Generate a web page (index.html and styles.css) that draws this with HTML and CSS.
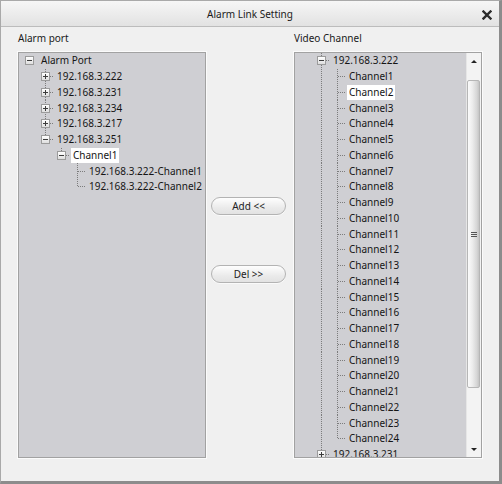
FILE: index.html
```html
<!DOCTYPE html>
<html>
<head>
<meta charset="utf-8">
<title>Alarm Link Setting</title>
<link rel="stylesheet" href="styles.css">
</head>
<body>
<div class="window">
  <div class="titlebar">
    <span></span>
    <span class="title">Alarm Link Setting</span>
    <span class="close"><svg width="10" height="10" viewBox="0 0 10 10"><path d="M1.5 1.5 L8.5 8.5 M8.5 1.5 L1.5 8.5" stroke="#2b2b2b" stroke-width="2.4" stroke-linecap="square"/></svg></span>
  </div>
  <div class="content">
    <div class="label">Alarm port</div>
    <div></div>
    <div class="label">Video Channel</div>

    <div class="panel">
      <div class="tree">
        <div class="row"><span class="c"><b class="ex minus"></b></span><span class="tx">Alarm Port</span></div>
        <div class="row"><span class="c"></span><span class="c t"><b class="ex plus"></b></span><span class="tx">192.168.3.222</span></div>
        <div class="row"><span class="c"></span><span class="c t"><b class="ex plus"></b></span><span class="tx">192.168.3.231</span></div>
        <div class="row"><span class="c"></span><span class="c t"><b class="ex plus"></b></span><span class="tx">192.168.3.234</span></div>
        <div class="row"><span class="c"></span><span class="c t"><b class="ex plus"></b></span><span class="tx">192.168.3.217</span></div>
        <div class="row"><span class="c"></span><span class="c l"><b class="ex minus"></b></span><span class="tx">192.168.3.251</span></div>
        <div class="row"><span class="c"></span><span class="c"></span><span class="c l"><b class="ex minus"></b></span><span class="tx sel">Channel1</span></div>
        <div class="row"><span class="c"></span><span class="c"></span><span class="c"></span><span class="c t"></span><span class="tx">192.168.3.222-Channel1</span></div>
        <div class="row"><span class="c"></span><span class="c"></span><span class="c"></span><span class="c l"></span><span class="tx">192.168.3.222-Channel2</span></div>
      </div>
    </div>

    <div class="mid">
      <button class="btn">Add &lt;&lt;</button>
      <button class="btn">Del &gt;&gt;</button>
    </div>

    <div class="panel split">
      <div class="tree">
        <div class="row"><span class="c"></span><span class="c t"><b class="ex minus"></b></span><span class="tx">192.168.3.222</span></div>
        <div class="row"><span class="c"></span><span class="c v"></span><span class="c t"></span><span class="tx">Channel1</span></div>
        <div class="row"><span class="c"></span><span class="c v"></span><span class="c t"></span><span class="tx sel">Channel2</span></div>
        <div class="row"><span class="c"></span><span class="c v"></span><span class="c t"></span><span class="tx">Channel3</span></div>
        <div class="row"><span class="c"></span><span class="c v"></span><span class="c t"></span><span class="tx">Channel4</span></div>
        <div class="row"><span class="c"></span><span class="c v"></span><span class="c t"></span><span class="tx">Channel5</span></div>
        <div class="row"><span class="c"></span><span class="c v"></span><span class="c t"></span><span class="tx">Channel6</span></div>
        <div class="row"><span class="c"></span><span class="c v"></span><span class="c t"></span><span class="tx">Channel7</span></div>
        <div class="row"><span class="c"></span><span class="c v"></span><span class="c t"></span><span class="tx">Channel8</span></div>
        <div class="row"><span class="c"></span><span class="c v"></span><span class="c t"></span><span class="tx">Channel9</span></div>
        <div class="row"><span class="c"></span><span class="c v"></span><span class="c t"></span><span class="tx">Channel10</span></div>
        <div class="row"><span class="c"></span><span class="c v"></span><span class="c t"></span><span class="tx">Channel11</span></div>
        <div class="row"><span class="c"></span><span class="c v"></span><span class="c t"></span><span class="tx">Channel12</span></div>
        <div class="row"><span class="c"></span><span class="c v"></span><span class="c t"></span><span class="tx">Channel13</span></div>
        <div class="row"><span class="c"></span><span class="c v"></span><span class="c t"></span><span class="tx">Channel14</span></div>
        <div class="row"><span class="c"></span><span class="c v"></span><span class="c t"></span><span class="tx">Channel15</span></div>
        <div class="row"><span class="c"></span><span class="c v"></span><span class="c t"></span><span class="tx">Channel16</span></div>
        <div class="row"><span class="c"></span><span class="c v"></span><span class="c t"></span><span class="tx">Channel17</span></div>
        <div class="row"><span class="c"></span><span class="c v"></span><span class="c t"></span><span class="tx">Channel18</span></div>
        <div class="row"><span class="c"></span><span class="c v"></span><span class="c t"></span><span class="tx">Channel19</span></div>
        <div class="row"><span class="c"></span><span class="c v"></span><span class="c t"></span><span class="tx">Channel20</span></div>
        <div class="row"><span class="c"></span><span class="c v"></span><span class="c t"></span><span class="tx">Channel21</span></div>
        <div class="row"><span class="c"></span><span class="c v"></span><span class="c t"></span><span class="tx">Channel22</span></div>
        <div class="row"><span class="c"></span><span class="c v"></span><span class="c t"></span><span class="tx">Channel23</span></div>
        <div class="row"><span class="c"></span><span class="c v"></span><span class="c l"></span><span class="tx">Channel24</span></div>
        <div class="row"><span class="c"></span><span class="c t"><b class="ex plus"></b></span><span class="tx">192.168.3.231</span></div>
      </div>
      <div class="sb">
        <div class="sb-btn"><span class="arr up"></span></div>
        <div class="sb-track">
          <div class="thumb"><span class="grip"></span></div>
        </div>
        <div class="sb-btn"><span class="arr down"></span></div>
      </div>
    </div>
  </div>
</div>
</body>
</html>
```

FILE: styles.css
```css
html, body {
  margin: 0;
  padding: 0;
  background: #f0f0f0;
}
body {
  font-family: "Noto Sans", "Open Sans", "DejaVu Sans", sans-serif;
  font-size: 10px;
  color: #151515;
}
.window {
  width: 502px;
  height: 484px;
  box-sizing: border-box;
  background: #f0f0f0;
  border: 1px solid #a9a9a9;
  border-right: 3px solid #8c8c8c;
  border-bottom: 3px solid #8c8c8c;
  display: flex;
  flex-direction: column;
  overflow: hidden;
}
.titlebar {
  height: 26px;
  flex: none;
  box-sizing: border-box;
  border-bottom: 1px solid #bcbcbc;
  background: linear-gradient(#f6f6f6, #e2e2e2);
  display: grid;
  grid-template-columns: 1fr auto 1fr;
  align-items: center;
}
.title {
  font-size: 10px;
  color: #1a1a1a;
  padding-top: 1px;
}
.close {
  justify-self: end;
  padding-right: 7px;
  display: flex;
  padding-top: 2px;
}
.content {
  display: grid;
  grid-template-columns: 188px 88px 188px;
  grid-template-rows: auto 406px;
  padding-left: 17px;
}
.label {
  margin: 3px 0 6px;
  line-height: 16px;
  color: #1a1a1a;
}
.panel {
  box-sizing: border-box;
  border: 1px solid #a2a2a2;
  background: #cfcfd3;
  overflow: hidden;
  box-shadow: 0 0 0 1px #fbfbfb;
}
.panel.split {
  display: flex;
}
.tree {
  padding-left: 3px;
  flex: 1;
  min-width: 0;
}
.row {
  height: 15.75px;
  display: flex;
  align-items: stretch;
}
.c {
  width: 16px;
  flex: none;
  display: flex;
  align-items: center;
}
.c.v {
  background: repeating-linear-gradient(#7c7c7c 0 1px, transparent 1px 2px) 7px 0 / 1px 100% no-repeat;
}
.c.t {
  background:
    repeating-linear-gradient(#7c7c7c 0 1px, transparent 1px 2px) 7px 0 / 1px 100% no-repeat,
    repeating-linear-gradient(90deg, #7c7c7c 0 1px, transparent 1px 2px) 8px 50% / 8px 1px no-repeat;
}
.c.l {
  background:
    repeating-linear-gradient(#7c7c7c 0 1px, transparent 1px 2px) 7px 0 / 1px 50% no-repeat,
    repeating-linear-gradient(90deg, #7c7c7c 0 1px, transparent 1px 2px) 8px 50% / 8px 1px no-repeat;
}
.ex {
  width: 9px;
  height: 9px;
  margin-left: 3px;
  box-sizing: border-box;
  border: 1px solid #9b9b9b;
  background:
    linear-gradient(#3c3c3c, #3c3c3c) center / 5px 1px no-repeat,
    linear-gradient(#ffffff, #dedede);
}
.ex.plus {
  background:
    linear-gradient(#3c3c3c, #3c3c3c) center / 5px 1px no-repeat,
    linear-gradient(#3c3c3c, #3c3c3c) center / 1px 5px no-repeat,
    linear-gradient(#ffffff, #dedede);
}
.tx {
  align-self: center;
  margin-left: 1px;
  padding: 0 2px;
  line-height: 15px;
  white-space: nowrap;
}
.tx.sel {
  background: #ffffff;
}
.mid {
  display: flex;
  flex-direction: column;
  padding: 145px 0 0 5px;
  gap: 50px;
}
.btn {
  width: 75px;
  height: 18px;
  box-sizing: border-box;
  border: 1px solid #b3b3b3;
  border-radius: 9px;
  background: linear-gradient(#fefefe, #ebebeb 60%, #e2e2e2);
  font-family: inherit;
  font-size: 10px;
  color: #222;
  padding: 0;
  box-shadow: 0 1px 0 #fafafa;
}
.sb {
  width: 15px;
  flex: none;
  display: flex;
  flex-direction: column;
  background: #f3f3f3;
  border-left: 1px solid #e6e6e6;
  box-sizing: border-box;
}
.sb-btn {
  height: 16px;
  flex: none;
  display: flex;
  align-items: center;
  justify-content: center;
}
.arr {
  width: 0;
  height: 0;
  border-left: 3px solid transparent;
  border-right: 3px solid transparent;
}
.arr.up {
  border-bottom: 3px solid #222;
}
.arr.down {
  border-top: 3px solid #222;
}
.sb-track {
  flex: 1;
  padding-top: 11px;
}
.thumb {
  height: 308px;
  box-sizing: border-box;
  margin: 0 1px 0 0;
  border: 1px solid #b6b6b6;
  border-radius: 2px;
  background: linear-gradient(90deg, #fbfbfb, #ececec 40%, #d6d6d6 80%, #c4c4c4);
  display: flex;
  align-items: center;
  justify-content: center;
}
.grip {
  width: 6px;
  height: 5px;
  background: repeating-linear-gradient(#555 0 1px, transparent 1px 2px);
}
```
